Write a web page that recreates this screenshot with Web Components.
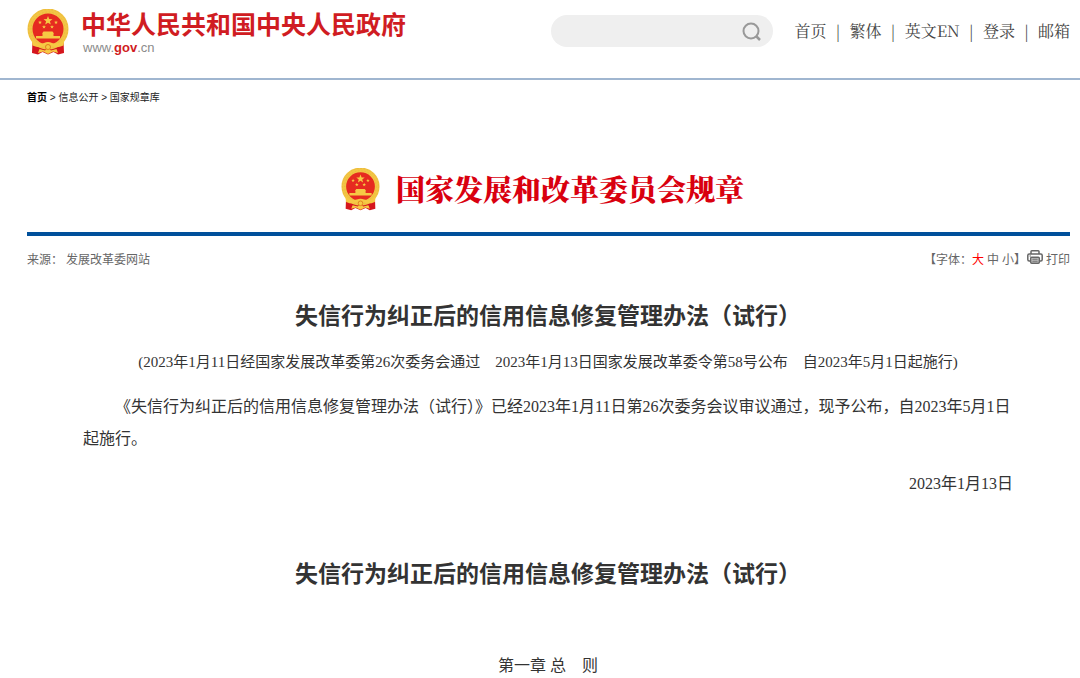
<!DOCTYPE html>
<html lang="zh-CN">
<head>
<meta charset="UTF-8">
<meta name="viewport" content="width=device-width, initial-scale=1">
<title>失信行为纠正后的信用信息修复管理办法（试行）</title>
<style>
  body {
    margin: 0;
    background: #fff;
    color: #333;
    font-family: "Liberation Serif", "Noto Sans CJK SC", serif;
    font-size: 16px;
  }
</style>
</head>
<body>
<gov-header></gov-header>
<crumb-nav></crumb-nav>
<main>
  <channel-banner>国家发展和改革委员会规章</channel-banner>
  <article-meta source="发展改革委网站"></article-meta>
  <policy-article>
    <policy-title>失信行为纠正后的信用信息修复管理办法（试行）</policy-title>
    <policy-text kind="note">(2023年1月11日经国家发展改革委第26次委务会通过　2023年1月13日国家发展改革委令第58号公布　自2023年5月1日起施行)</policy-text>
    <policy-text>《失信行为纠正后的信用信息修复管理办法（试行）》已经2023年1月11日第26次委务会议审议通过，现予公布，自2023年5月1日起施行。</policy-text>
    <policy-text kind="date">2023年1月13日</policy-text>
    <policy-title class="second">失信行为纠正后的信用信息修复管理办法（试行）</policy-title>
    <policy-text kind="chapter">第一章 总　则</policy-text>
  </policy-article>
</main>

<script>
class NationalEmblem extends HTMLElement {
  constructor() {
    super();
    this.attachShadow({ mode: 'open' });
    this.shadowRoot.innerHTML = `
      <style>
        :host { display: block; flex: none; width: 42px; }
        svg { display: block; width: 100%; }
      </style>
      <svg viewBox="0 0 84 92" aria-hidden="true">
        <path d="M11 62 L10 88 L22 91 L31 86 L42 91 L53 86 L62 91 L74 88 L73 62Z" fill="#d5161d"/>
        <circle cx="42" cy="40" r="36" fill="#e62a20" stroke="#f2c545" stroke-width="10"/>
        <circle cx="42" cy="40" r="39" fill="none" stroke="#e2b035" stroke-width="1" stroke-dasharray="4 3"/>
        <circle cx="42" cy="40" r="34" fill="none" stroke="#e2b035" stroke-width="1" stroke-dasharray="3 4"/>
        <path d="M42 14 l2.4 6.2 6.6.3 -5.2 4.1 1.8 6.4 -5.6-3.7 -5.6 3.7 1.8-6.4 -5.2-4.1 6.6-.3z" fill="#f6c944"/>
        <g fill="#f6c944">
          <path d="M26 23l1 2.6 2.8.1-2.2 1.7.8 2.7-2.4-1.5-2.4 1.5.8-2.7-2.2-1.7 2.8-.1z"/>
          <path d="M58 23l1 2.6 2.8.1-2.2 1.7.8 2.7-2.4-1.5-2.4 1.5.8-2.7-2.2-1.7 2.8-.1z"/>
          <path d="M34 32l1 2.6 2.8.1-2.2 1.7.8 2.7-2.4-1.5-2.4 1.5.8-2.7-2.2-1.7 2.8-.1z"/>
          <path d="M50 32l1 2.6 2.8.1-2.2 1.7.8 2.7-2.4-1.5-2.4 1.5.8-2.7-2.2-1.7 2.8-.1z"/>
          <path d="M33 45h18l3 4H30zM31 49h22v5H31zM18 54h48v5H18z"/>
          <path d="M9 60 Q20 72 34 68 Q42 64 50 68 Q64 72 75 60 L73 73 Q59 79 50 74 Q42 69 34 74 Q25 79 11 73Z"/>
          <path d="M25 80 L36 83 L42 78 L48 83 L59 80 L62 88 L52 85 L42 90 L32 85 L22 88Z"/>
        </g>
        <circle cx="42" cy="76" r="5" fill="#f6c944" stroke="#e2801f" stroke-width="2"/>
      </svg>
    `;
  }
}
customElements.define('national-emblem', NationalEmblem);

class SearchBox extends HTMLElement {
  constructor() {
    super();
    this.attachShadow({ mode: 'open' });
    this.shadowRoot.innerHTML = `
      <style>
        :host { display: block; width: 222px; }
        form {
          display: flex;
          align-items: center;
          height: 32px;
          padding: 0 12px 0 16px;
          background: #efefef;
          border-radius: 16px;
          box-sizing: border-box;
        }
        input {
          flex: 1;
          min-width: 0;
          border: 0;
          outline: 0;
          background: none;
          font: inherit;
        }
        button { border: 0; padding: 0; background: none; cursor: pointer; }
        svg { display: block; }
      </style>
      <form>
        <input type="text" aria-label="搜索">
        <button type="button" aria-label="搜索">
          <svg width="19" height="19" viewBox="0 0 19 19" fill="none" stroke="#999" stroke-width="2">
            <circle cx="9" cy="9" r="7.5"/>
            <path d="M14 14l4 4" stroke-width="2.5"/>
          </svg>
        </button>
      </form>
    `;
  }
}
customElements.define('search-box', SearchBox);

class GovHeader extends HTMLElement {
  constructor() {
    super();
    this.attachShadow({ mode: 'open' });
    this.shadowRoot.innerHTML = `
      <style>
        :host { display: block; border-bottom: 2px solid #a0b6d0; }
        header {
          display: flex;
          align-items: flex-start;
          justify-content: space-between;
          padding: 9px 10px 23px 27px;
        }
        a { color: inherit; text-decoration: none; }
        .logo { display: flex; align-items: center; gap: 12px; white-space: nowrap; }
        .name {
          display: block;
          color: #d01c22;
          font: bold 25px/28px "Noto Sans CJK SC", sans-serif;
        }
        .domain {
          display: block;
          margin-top: 4px;
          padding-left: 2px;
          color: #8b8b8b;
          font: 13px/14px "Liberation Sans", sans-serif;
        }
        .domain b { color: #d01c22; font-weight: bold; }
        .tools { display: flex; align-items: center; gap: 22px; padding-top: 5px; }
        nav {
          display: flex;
          gap: 9px;
          color: #444;
          font: 16px/34px "Noto Serif CJK SC", "Liberation Serif", "Noto Sans CJK SC", serif;
          white-space: nowrap;
        }
      </style>
      <header>
        <a class="logo" href="#">
          <national-emblem></national-emblem>
          <span>
            <span class="name">中华人民共和国中央人民政府</span>
            <span class="domain">www.<b>gov</b>.cn</span>
          </span>
        </a>
        <div class="tools">
          <search-box></search-box>
          <nav>
            <a href="#">首页</a><span>|</span>
            <a href="#">繁体</a><span>|</span>
            <a href="#">英文EN</a><span>|</span>
            <a href="#">登录</a><span>|</span>
            <a href="#">邮箱</a>
          </nav>
        </div>
      </header>
    `;
  }
}
customElements.define('gov-header', GovHeader);

class CrumbNav extends HTMLElement {
  constructor() {
    super();
    this.attachShadow({ mode: 'open' });
    this.shadowRoot.innerHTML = `
      <style>
        :host { display: block; padding: 10px 27px 0; }
        nav { color: #222; font: 10px/16px "Liberation Sans", "Noto Sans CJK SC", sans-serif; }
        a { color: inherit; text-decoration: none; }
        a:first-child { font-weight: bold; color: #000; }
      </style>
      <nav><a href="#">首页</a> &gt; <a href="#">信息公开</a> &gt; <a href="#">国家规章库</a></nav>
    `;
  }
}
customElements.define('crumb-nav', CrumbNav);

class ChannelBanner extends HTMLElement {
  constructor() {
    super();
    this.attachShadow({ mode: 'open' });
    this.shadowRoot.innerHTML = `
      <style>
        :host {
          display: flex;
          align-items: center;
          justify-content: center;
          gap: 16px;
          margin: 62px 10px 0 27px;
          padding: 0 12px 21px 0;
          border-bottom: 4px solid #00509b;
          color: #d9000f;
          font: 900 29px/42px "Noto Serif CJK SC", "Noto Sans CJK SC", serif;
        }
        national-emblem { width: 39px; }
      </style>
      <national-emblem></national-emblem><span><slot></slot></span>
    `;
  }
}
customElements.define('channel-banner', ChannelBanner);

class ArticleMeta extends HTMLElement {
  constructor() {
    super();
    this.attachShadow({ mode: 'open' });
  }

  connectedCallback() {
    this.shadowRoot.innerHTML = `
      <style>
        :host {
          display: flex;
          justify-content: space-between;
          margin: 14px 10px 0 27px;
          color: #666;
          font: 12px/18px "Noto Sans CJK SC", sans-serif;
        }
        .tools { display: flex; }
        button { border: 0; padding: 0; background: none; color: inherit; font: inherit; cursor: pointer; }
        .sizes { display: flex; gap: 3px; }
        .sizes .on { color: #f00; }
        .print { display: flex; gap: 3px; margin-left: 1px; }
        .source { margin-left: 3px; }
      </style>
      <div>来源：<span class="source">${this.getAttribute('source')}</span></div>
      <div class="tools">
        <span>【字体：</span>
        <span class="sizes"><button class="on">大</button><button>中</button><button>小</button></span><span>】</span>
        <button class="print">
          <svg width="16" height="14" viewBox="0 0 16 14" fill="none" stroke="#666" stroke-width="1.5">
            <path d="M4 4V1.6Q4 .8 4.8 .8H11.2Q12 .8 12 1.6V4"/>
            <path d="M3.5 11H2.2Q.8 11 .8 9.5V5.5Q.8 4 2.2 4H13.8Q15.2 4 15.2 5.5V9.5Q15.2 11 13.8 11H12.5"/>
            <rect x="3.7" y="7.2" width="8.6" height="6" rx="1" fill="#ccc"/>
            <path d="M5.3 9.2h5.4M5.3 11.2h5.4M2.5 6h1.5" stroke-width="1"/>
          </svg>
          打印
        </button>
      </div>
    `;
  }
}
customElements.define('article-meta', ArticleMeta);

class PolicyArticle extends HTMLElement {
  constructor() {
    super();
    this.attachShadow({ mode: 'open' });
    this.shadowRoot.innerHTML = `
      <style>
        :host { display: block; padding: 30px 67px 0 83px; }
        ::slotted(.second) { margin-top: 56px; margin-bottom: 62px; }
      </style>
      <slot></slot>
    `;
  }
}
customElements.define('policy-article', PolicyArticle);

class PolicyTitle extends HTMLElement {
  constructor() {
    super();
    this.attachShadow({ mode: 'open' });
    this.shadowRoot.innerHTML = `
      <style>
        :host { display: block; margin-bottom: 16px; }
        h1 {
          margin: 0;
          text-align: center;
          font: bold 23px/32px "Noto Sans CJK SC", sans-serif;
        }
      </style>
      <h1><slot></slot></h1>
    `;
  }
}
customElements.define('policy-title', PolicyTitle);

class PolicyText extends HTMLElement {
  constructor() {
    super();
    this.attachShadow({ mode: 'open' });
    this.shadowRoot.innerHTML = `
      <style>
        :host { display: block; line-height: 32px; margin-bottom: 13px; }
        p { margin: 0; text-indent: 2em; }
        :host([kind]) p { text-indent: 0; }
        :host([kind="note"]) { font-size: 15px; text-align: center; }
        :host([kind="date"]) { text-align: right; }
        :host([kind="chapter"]) { text-align: center; }
      </style>
      <p><slot></slot></p>
    `;
  }
}
customElements.define('policy-text', PolicyText);
</script>
</body>
</html>
